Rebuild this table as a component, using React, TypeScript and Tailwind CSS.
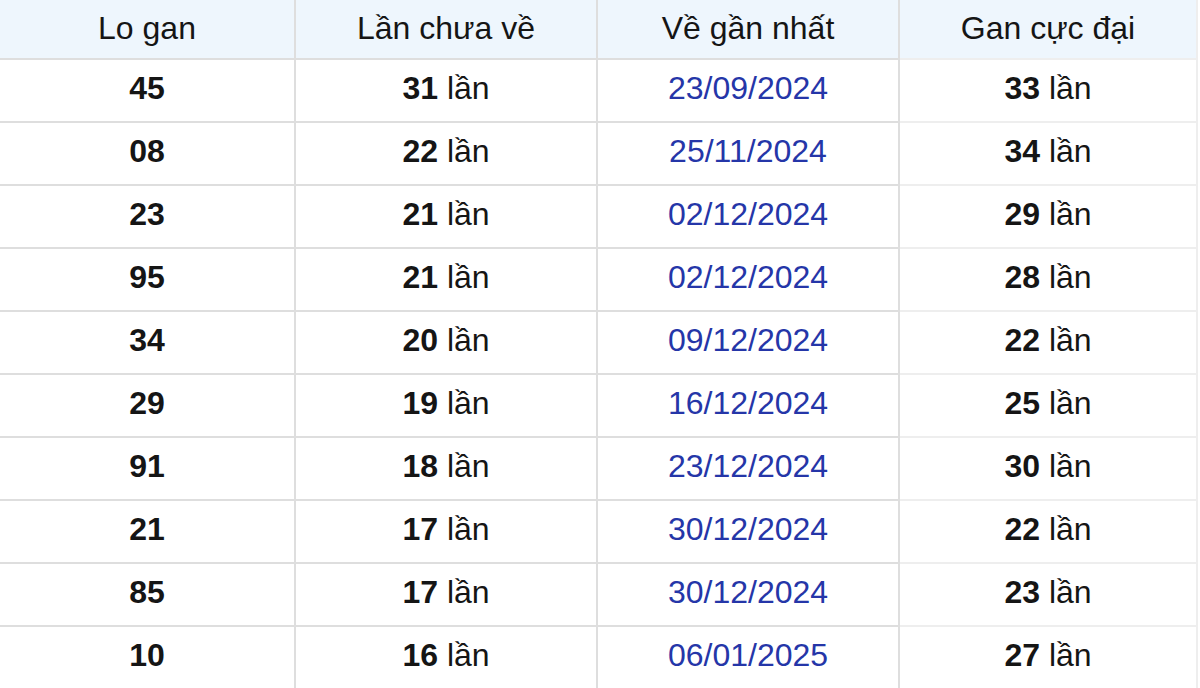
import React from "react";

const rows: [string, string, string, string][] = [
  ["45", "31", "23/09/2024", "33"],
  ["08", "22", "25/11/2024", "34"],
  ["23", "21", "02/12/2024", "29"],
  ["95", "21", "02/12/2024", "28"],
  ["34", "20", "09/12/2024", "22"],
  ["29", "19", "16/12/2024", "25"],
  ["91", "18", "23/12/2024", "30"],
  ["21", "17", "30/12/2024", "22"],
  ["85", "17", "30/12/2024", "23"],
  ["10", "16", "06/01/2025", "27"],
];

export default function App() {
  return (
    <div className="w-[1200px] h-[688px] overflow-hidden bg-white font-['Liberation_Sans',Arial,sans-serif] text-[32px] text-[#151515]">
      <table className="w-[1198px] table-fixed border-collapse">
        <colgroup>
          <col className="w-[295px]" />
          <col className="w-[302px]" />
          <col className="w-[302px]" />
          <col />
        </colgroup>
        <thead>
          <tr className="h-[59px] bg-[#eef6fd]">
            <th className="pb-[3px] border-b-2 border-r-2 border-[#dedede] font-normal text-center">Lo gan</th>
            <th className="pb-[3px] border-b-2 border-r-2 border-[#dedede] font-normal text-center">Lần chưa về</th>
            <th className="pb-[3px] border-b-2 border-r-2 border-[#dedede] font-normal text-center">Về gần nhất</th>
            <th className="pb-[3px] border-b-2 border-r-2 border-[#eeeeee] font-normal text-center">Gan cực đại</th>
          </tr>
        </thead>
        <tbody>
          {rows.map((r, i) => (
            <tr key={i} className="h-[63px]">
              <td className="pb-[5px] border-b-2 border-r-2 border-[#dedede] text-center font-bold">{r[0]}</td>
              <td className="pb-[5px] border-b-2 border-r-2 border-[#dedede] text-center">
                <b>{r[1]}</b> lần
              </td>
              <td className="pb-[5px] border-b-2 border-r-2 border-[#dedede] text-center text-[#2536a8]">{r[2]}</td>
              <td className="pb-[5px] border-b-2 border-r-2 border-[#eeeeee] text-center">
                <b>{r[3]}</b> lần
              </td>
            </tr>
          ))}
        </tbody>
      </table>
    </div>
  );
}
